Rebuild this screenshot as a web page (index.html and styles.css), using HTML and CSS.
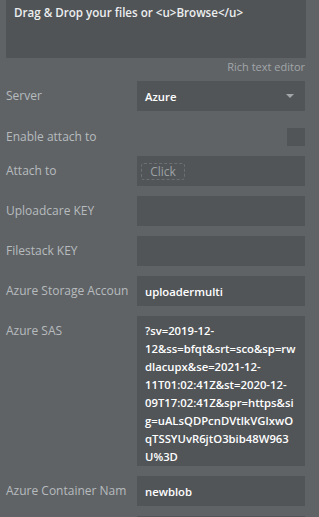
FILE: index.html
```html
<!DOCTYPE html>
<html lang="en">
<head>
    <meta charset="UTF-8">
    <meta name="viewport" content="width=device-width, initial-scale=1.0">
    <title>Uploader properties</title>
    <link rel="stylesheet" href="styles.css">
</head>
<body>

    <div class="panel">
        <div class="rich-box">Drag &amp; Drop your files or &lt;u&gt;Browse&lt;/u&gt;</div>
        <div class="rich-note">Rich text editor</div>

        <div class="row">
            <div class="label">Server</div>
            <div class="field select">
                <span>Azure</span>
                <span class="caret"></span>
            </div>
        </div>

        <div class="row check-row">
            <div class="label">Enable attach to</div>
            <div class="checkbox"></div>
        </div>

        <div class="row">
            <div class="label">Attach to</div>
            <div class="field attach">
                <span class="click-btn">Click</span>
            </div>
        </div>

        <div class="row">
            <div class="label">Uploadcare KEY</div>
            <div class="field"></div>
        </div>

        <div class="row">
            <div class="label">Filestack KEY</div>
            <div class="field"></div>
        </div>

        <div class="row">
            <div class="label">Azure Storage Accoun</div>
            <div class="field">uploadermulti</div>
        </div>

        <div class="row tall">
            <div class="label">Azure SAS</div>
            <div class="field multiline">?sv=2019-12-<br>12&amp;ss=bfqt&amp;srt=sco&amp;sp=rw<br>dlacupx&amp;se=2021-12-<br>11T01:02:41Z&amp;st=2020-12-<br>09T17:02:41Z&amp;spr=https&amp;si<br>g=uALsQDPcnDVtlkVGlxwO<br>qTSSYUvR6jtO3bib48W963<br>U%3D</div>
        </div>

        <div class="row">
            <div class="label">Azure Container Nam</div>
            <div class="field">newblob</div>
        </div>

        <div class="row">
            <div class="label"></div>
            <div class="field"></div>
        </div>
    </div>

</body>
</html>
```

FILE: styles.css
```css
body {
    margin: 0;
    background-color: #5f6366;
    font-family: 'Open Sans', 'Liberation Sans', sans-serif;
    font-size: 12px;
    overflow: hidden;
}

.panel {
    padding: 0 14px 0 6px;
}

.rich-box {
    background-color: #505457;
    height: 58px;
    margin-right: -1px;
    padding: 4px 8px 0;
    box-sizing: border-box;
    color: #eceeef;
    font-size: 11.6px;
    font-weight: 600;
    line-height: 18px;
}

.rich-note {
    text-align: right;
    color: #a2a6a9;
    font-size: 11px;
    line-height: 18px;
    height: 23px;
}

.row {
    display: grid;
    grid-template-columns: 131px 168px;
    align-items: center;
    margin-bottom: 10px;
}

.label {
    color: #b7bbbe;
    line-height: 18px;
    white-space: nowrap;
}

.field {
    background-color: #515558;
    height: 30px;
    box-sizing: border-box;
    padding: 0 8px;
    display: flex;
    align-items: center;
    color: #ffffff;
    font-size: 11.3px;
    font-weight: 600;
}

.select {
    justify-content: space-between;
    padding-right: 11px;
}

.caret {
    width: 0;
    height: 0;
    border-left: 4px solid transparent;
    border-right: 4px solid transparent;
    border-top: 4px solid #a3a7aa;
}

.check-row {
    padding-top: 7px;
}

.checkbox {
    justify-self: end;
    width: 18px;
    height: 18px;
    background-color: #515558;
}

.attach {
    padding-left: 4px;
}

.click-btn {
    display: inline-block;
    width: 44px;
    height: 17px;
    box-sizing: border-box;
    border: 1px dashed #6c7073;
    border-radius: 3px;
    color: #9da1a4;
    font-size: 12px;
    font-weight: 400;
    text-align: center;
    line-height: 15px;
}

.tall {
    align-items: start;
}

.tall .label {
    margin-top: 6px;
}

.multiline {
    height: 150px;
    display: block;
    padding: 6px 4px 0 8px;
    line-height: 18px;
}
```
